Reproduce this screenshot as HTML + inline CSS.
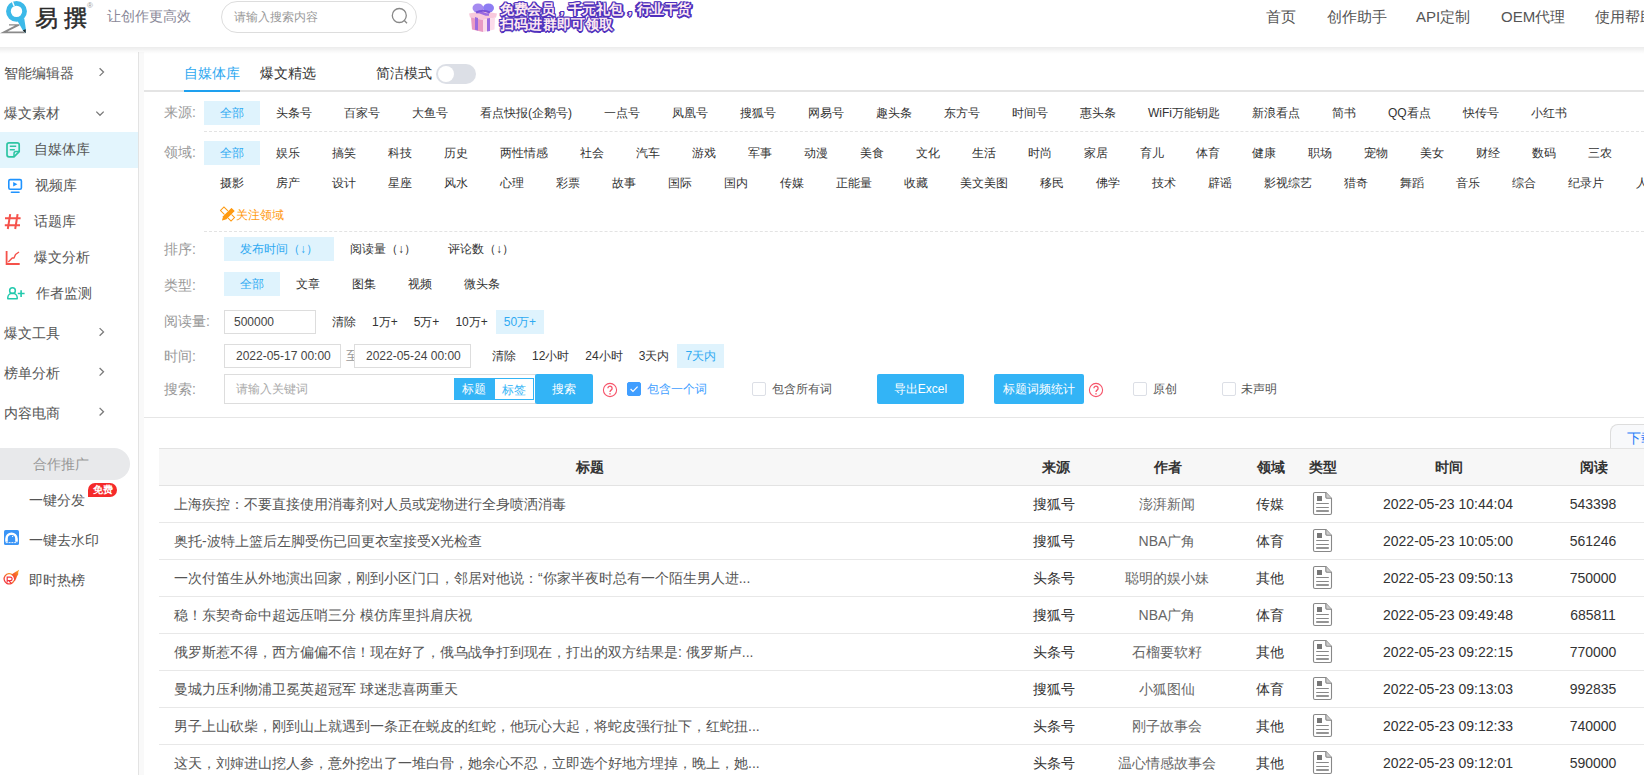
<!DOCTYPE html>
<html><head><meta charset="utf-8">
<style>
*{box-sizing:border-box;margin:0;padding:0}
html,body{width:1644px;height:775px;overflow:hidden;background:#fff;font-family:"Liberation Sans",sans-serif;color:#333}
.a{position:absolute;white-space:nowrap}
#hdr{position:absolute;left:0;top:0;width:1644px;height:47px;background:#fff}
#band{position:absolute;left:0;top:47px;width:1644px;height:7px;background:linear-gradient(rgba(0,0,0,0.075),rgba(0,0,0,0.055) 30%,rgba(0,0,0,0.02) 70%,rgba(0,0,0,0));z-index:5}
#side{position:absolute;left:0;top:52px;width:138px;height:723px;background:#fff}
#sline{position:absolute;left:138px;top:52px;width:1px;height:723px;background:#e3e3e3}
#sgap{position:absolute;left:139px;top:52px;width:5px;height:723px;background:#f9f9f9}
#main{position:absolute;left:144px;top:52px;width:1500px;height:723px;background:#fff}
.nav{font-size:15px;color:#555;top:8px}
.si{font-size:14px;color:#555}
.chev{position:absolute;width:7px;height:7px;border-right:1.3px solid #888;border-top:1.3px solid #888}
.tab{font-size:14px;line-height:18px}
.lbl{font-size:14px;color:#999}
.frow{display:flex;white-space:nowrap}
.it{display:inline-block;padding:0 16px;height:24px;line-height:24px;font-size:12px;color:#333}
.it.s{padding:0 8px}
.it.on{background:#dff3fd;color:#2faaf2}
.inp{height:24px;border:1px solid #ddd;background:#fff;font-size:12px;line-height:22px;padding-left:9px;color:#444}
.seg{width:40px;height:22px;line-height:22px;text-align:center;font-size:12px}
.btn{height:30px;line-height:30px;text-align:center;background:#33b4f6;color:#fff;font-size:12px;border-radius:2px}
.q{width:15px;height:15px;border:1px solid #f56c6c;border-radius:50%;color:#f56c6c;font-size:11px;line-height:13px;text-align:center}
.cb{width:14px;height:14px;border:1px solid #dcdfe6;border-radius:2px;background:#fff}
.cb.on{background:#409eff;border-color:#409eff}
.th{top:407px;font-size:14px;font-weight:bold;color:#333}
.td{font-size:14px;line-height:18px}
.c{text-align:center}
.gift{font-size:14px;font-weight:900;line-height:15px;color:#fde9f1;letter-spacing:-0.35px;text-shadow:1.5px 0.0px 0 #4f30bd,-1.5px 0.0px 0 #4f30bd,0.0px 1.5px 0 #4f30bd,0.0px -1.5px 0 #4f30bd,1.1px 1.1px 0 #4f30bd,-1.1px -1.1px 0 #4f30bd,1.1px -1.1px 0 #4f30bd,-1.1px 1.1px 0 #4f30bd}
</style></head><body>
<div id="hdr">
  <svg class="a" style="left:0;top:0" width="30" height="36" viewBox="0 0 30 36">
    <path d="M9 24.2 L19.5 24.2 L19.5 25.6 L7.5 31.6 L24 31.6 L25 33.2 L0 33.2 L15 25.6 L9 25.4 Z" fill="#8a8a8a"/>
    <circle cx="16.5" cy="11.35" r="8.07" fill="none" stroke="#3cb9e8" stroke-width="4.75"/>
    <path d="M17.2 20.5 L24.3 18.8 L25.9 29.5 L25.6 33.2 L22.8 30.2 Z" fill="#3cb9e8"/>
    <path d="M22.8 30.2 L25.8 29.2 L25.6 33.2 Z" fill="#222"/>
    <path d="M12.3 1.2 L14.2 6.2" stroke="#fff" stroke-width="1.4"/>
  </svg>
  <div class="a" style="left:35px;top:3px;font-size:23px;font-weight:normal;color:#2a2a2a;letter-spacing:6px;-webkit-text-stroke:0.5px #2a2a2a">易撰</div>
  <div class="a" style="left:87px;top:1px;font-size:8px;color:#999">®</div>
  <div class="a" style="left:107px;top:8px;font-size:14px;color:#8a8898">让创作更高效</div>
  <div class="a" style="left:221px;top:1px;width:196px;height:32px;border:1px solid #ddd;border-radius:16px"></div>
  <div class="a" style="left:234px;top:9px;font-size:12px;color:#999">请输入搜索内容</div>
  <svg class="a" style="left:390px;top:7px" width="20" height="20" viewBox="0 0 20 20"><circle cx="9.3" cy="8.5" r="7" fill="none" stroke="#888" stroke-width="1.3"/><path d="M14.3 13.5 L17 16.2" stroke="#888" stroke-width="1.3"/></svg>
  
  <svg class="a" style="left:466px;top:1px" width="32" height="33" viewBox="466 1 32 33">
    <path d="M469 13.5 L483 11 L497 13.5 L496 17.5 L483 20 L470 17.5 Z" fill="#f8c9dc"/>
    <path d="M471 17.5 L483 20 V32 L472 29.5 Z" fill="#e99ac3"/>
    <path d="M483 20 L495 17.5 L494.5 29.5 L483 32 Z" fill="#fbdcea"/>
    <path d="M475 17 L478 18 V30.5 L475 29.8 Z M487 18.5 L490 18 V31 L487 31.5 Z" fill="#9b6ae0"/>
    <path d="M477 12 L480 12.3 L486 14.5 L489 14.5" stroke="#9b6ae0" stroke-width="2.5" fill="none"/>
    <ellipse cx="478" cy="8" rx="5.5" ry="4.5" fill="#a58af0"/>
    <ellipse cx="488.5" cy="8" rx="5.5" ry="4.5" fill="#8d7cf3"/>
    <path d="M476 12.5 Q483 9 490 12.5" stroke="#7a52d8" stroke-width="2" fill="none"/>
  </svg>
  <div class="a gift" style="left:500px;top:2px">免费会员，千元礼包，行业干货</div>
  <div class="a gift" style="left:500px;top:17px;letter-spacing:0.2px">扫码进群即可领取</div>
  <div class="a nav" style="left:1266px">首页</div>
  <div class="a nav" style="left:1327px">创作助手</div>
  <div class="a nav" style="left:1416px">API定制</div>
  <div class="a nav" style="left:1501px">OEM代理</div>
  <div class="a nav" style="left:1595px">使用帮助</div>
</div>
<div id="band"></div>
<div id="side">
  
  <svg class="a" style="left:0;top:476px" width="30" height="64" viewBox="0 528 30 64">
    <defs><linearGradient id="hg" x1="0" y1="1" x2="1" y2="0"><stop offset="0" stop-color="#f2273f"/><stop offset="0.55" stop-color="#f76a2a"/><stop offset="1" stop-color="#fbb31a"/></linearGradient></defs>
    <rect x="4" y="530" width="15" height="15" rx="1.6" fill="#3b95f6"/>
    <path d="M6.5 541.8 V538.8 A5 5 0 0 1 16.5 538.8 V541.8" fill="none" stroke="#fff" stroke-width="2.6"/>
    <circle cx="11.5" cy="538" r="2.8" fill="#3b95f6"/>
    <circle cx="12.6" cy="536.4" r="0.6" fill="#fff"/>
    <path d="M5.8 542.6 H17.2" stroke="#fff" stroke-width="0.9" stroke-dasharray="2 0.8"/>
    <path d="M12.8 575.2 A5.1 5.1 0 1 0 14 580.5" fill="none" stroke="url(#hg)" stroke-width="1.3"/>
    <path d="M7.2 582.5 V577.2 H10.4 A1.7 1.7 0 0 1 10.4 580.6 H8.6 L11.6 583.6" fill="none" stroke="#f2333f" stroke-width="1.2"/>
    <path d="M11.5 574.5 Q14.5 572.5 19.2 569.8 Q17.6 572.5 18.2 574.5 Q16.8 576.2 16.2 578.6 Q15.4 581 14 581.5 Q14.6 577.5 11.5 574.5 Z" fill="url(#hg)"/>
  </svg>
  <div class="a si" style="left:4px;top:13px">智能编辑器</div>
  <div class="a si" style="left:4px;top:53px">爆文素材</div>
  <div class="a" style="left:0;top:80px;width:138px;height:36px;background:#e3f5fd"></div>
  <svg class="a" style="left:0;top:82px" width="30" height="250" viewBox="0 134 30 250">
    <!-- doc green -->
    <path d="M9 142.8 H17.2 A2 2 0 0 1 19.2 144.8 V151.6 L14 156.8 H9 A2 2 0 0 1 7 154.8 V144.8 A2 2 0 0 1 9 142.8 Z" fill="none" stroke="#2ec5a3" stroke-width="1.7" stroke-linejoin="round"/>
    <path d="M14 156.8 V153.5 A2 2 0 0 1 16 151.5 H19.2" fill="none" stroke="#2ec5a3" stroke-width="1.5"/>
    <path d="M9.8 146.3 H16.2 M9.8 149.8 H14.8" stroke="#2ec5a3" stroke-width="1.5"/>
    <!-- video blue -->
    <rect x="8.8" y="179.6" width="12.6" height="9.6" rx="1.4" fill="none" stroke="#1f93ff" stroke-width="1.6"/>
    <path d="M13.2 182 L17.4 184.3 L13.2 186.6 Z" fill="#1f93ff"/>
    <path d="M11.4 192.3 H19" stroke="#1f93ff" stroke-width="1.6" stroke-linecap="round"/>
    <!-- hash red -->
    <path d="M10.2 214.2 L7.8 229 M17.6 214.2 L15.2 229 M5 218.2 H20.6 M4.8 225.2 H20" stroke="#f5524b" stroke-width="2"/>
    <!-- chart red -->
    <path d="M6.6 251 V264 H19.7" fill="none" stroke="#f5524b" stroke-width="1.8"/>
    <path d="M8.3 262 L12.2 258 L14 258 L15.5 254.5 L19 252" fill="none" stroke="#f5524b" stroke-width="1.4" stroke-linejoin="round"/>
    <!-- person green -->
    <circle cx="12.5" cy="290.7" r="2.85" fill="none" stroke="#22c9ad" stroke-width="1.5"/>
    <path d="M7.8 298.8 V297.6 A4.7 4.3 0 0 1 17.2 297.6 V298.8 Z" fill="none" stroke="#22c9ad" stroke-width="1.5" stroke-linejoin="round"/>
    <path d="M17.8 293.5 H24.6 M21.1 290.2 V296.9" stroke="#22c9ad" stroke-width="1.6"/>
  </svg>
  <div class="a si" style="left:34px;top:89px">自媒体库</div>
  <div class="a si" style="left:35px;top:125px">视频库</div>
  <div class="a si" style="left:34px;top:161px">话题库</div>
  <div class="a si" style="left:34px;top:197px">爆文分析</div>
  <div class="a si" style="left:36px;top:233px">作者监测</div>
  <div class="a si" style="left:4px;top:273px">爆文工具</div>
  <div class="a si" style="left:4px;top:313px">榜单分析</div>
  <div class="a si" style="left:4px;top:353px">内容电商</div>
  <div class="a" style="left:-16px;top:396px;width:146px;height:32px;border-radius:16px;background:#e8e9eb"></div>
  <div class="a si" style="left:33px;top:404px;color:#999">合作推广</div>
  <div class="a si" style="left:29px;top:440px">一键分发</div>
  <div class="a" style="left:88px;top:431px;width:29px;height:14px;border-radius:7px 7px 7px 0;background:#f52a2a;color:#fff;font-size:10px;font-weight:bold;line-height:14px;text-align:center">免费</div>
  <div class="a si" style="left:29px;top:480px">一键去水印</div>
  <div class="a si" style="left:29px;top:520px">即时热榜</div>
</div>
<svg class="a" style="left:0;top:0;z-index:3" width="138" height="430" viewBox="0 0 138 430">
<path d="M99.6 68.3 L103.5 72.1 L99.6 75.9 M96.3 111.6 L100 115.3 L103.7 111.6 M99.6 328.1 L103.5 331.9 L99.6 335.7 M99.6 368 L103.5 371.8 L99.6 375.6 M99.6 407.9 L103.5 411.7 L99.6 415.5" fill="none" stroke="#7a7a7a" stroke-width="1.3"/>
</svg>
<div id="sline"></div>
<div id="sgap"></div>
<div id="main">
  <div class="a tab" style="left:40px;top:12px;color:#2ea8f0">自媒体库</div>
  <div class="a tab" style="left:116px;top:12px;color:#333">爆文精选</div>
  <div class="a tab" style="left:232px;top:12px;color:#333">简洁模式</div>
  <div class="a" style="left:292px;top:12px;width:40px;height:20px;border-radius:10px;background:#dcdfe6"></div>
  <div class="a" style="left:294px;top:14px;width:16px;height:16px;border-radius:8px;background:#fff"></div>
  <div class="a" style="left:0;top:38px;width:1500px;height:2px;background:#e4e4e4"></div>
  <div class="a" style="left:40px;top:38px;width:56px;height:2px;background:#1ea0ef"></div>

  <div class="a lbl" style="left:20px;top:52px">来源:</div>
  <div class="a frow" style="left:60px;top:49px"><span class="it on">全部</span><span class="it">头条号</span><span class="it">百家号</span><span class="it">大鱼号</span><span class="it">看点快报(企鹅号)</span><span class="it">一点号</span><span class="it">凤凰号</span><span class="it">搜狐号</span><span class="it">网易号</span><span class="it">趣头条</span><span class="it">东方号</span><span class="it">时间号</span><span class="it">惠头条</span><span class="it">WiFi万能钥匙</span><span class="it">新浪看点</span><span class="it">简书</span><span class="it">QQ看点</span><span class="it">快传号</span><span class="it">小红书</span></div>
  <div class="a" style="left:60px;top:79px;width:1440px;border-top:1px dashed #e3e3e3"></div>
  <div class="a lbl" style="left:20px;top:92px">领域:</div>
  <div class="a frow" style="left:60px;top:89px"><span class="it on">全部</span><span class="it">娱乐</span><span class="it">搞笑</span><span class="it">科技</span><span class="it">历史</span><span class="it">两性情感</span><span class="it">社会</span><span class="it">汽车</span><span class="it">游戏</span><span class="it">军事</span><span class="it">动漫</span><span class="it">美食</span><span class="it">文化</span><span class="it">生活</span><span class="it">时尚</span><span class="it">家居</span><span class="it">育儿</span><span class="it">体育</span><span class="it">健康</span><span class="it">职场</span><span class="it">宠物</span><span class="it">美女</span><span class="it">财经</span><span class="it">数码</span><span class="it">三农</span></div>
  <div class="a frow" style="left:60px;top:119px"><span class="it">摄影</span><span class="it">房产</span><span class="it">设计</span><span class="it">星座</span><span class="it">风水</span><span class="it">心理</span><span class="it">彩票</span><span class="it">故事</span><span class="it">国际</span><span class="it">国内</span><span class="it">传媒</span><span class="it">正能量</span><span class="it">收藏</span><span class="it">美文美图</span><span class="it">移民</span><span class="it">佛学</span><span class="it">技术</span><span class="it">辟谣</span><span class="it">影视综艺</span><span class="it">猎奇</span><span class="it">舞蹈</span><span class="it">音乐</span><span class="it">综合</span><span class="it">纪录片</span><span class="it">人物</span></div>
  <svg class="a" style="left:76px;top:154px" width="16" height="16" viewBox="220 206 16 16">
    <rect x="225" y="206.5" width="5" height="15" transform="rotate(-45 227.5 214)" fill="none" stroke="#ff9a10" stroke-width="1"/>
    <path d="M222 220.5 L223.2 216.2 L231.5 207.9 L234.6 211 L226.3 219.3 Z" fill="#ff9a10" stroke="#fff" stroke-width="0.8"/>
    <path d="M222 220.5 L223.2 216.2 L231.5 207.9 L234.6 211 L226.3 219.3 Z" fill="#ff9a10"/>
  </svg>
  <div class="a" style="left:92px;top:155px;font-size:12px;color:#ff9a10">关注领域</div>
  <div class="a" style="left:60px;top:179px;width:1440px;border-top:1px dashed #e3e3e3"></div>

  <div class="a lbl" style="left:20px;top:189px">排序:</div>
  <div class="a frow" style="left:80px;top:185px"><span class="it on">发布时间（↓）</span><span class="it">阅读量（↓）</span><span class="it">评论数（↓）</span></div>
  <div class="a lbl" style="left:20px;top:225px">类型:</div>
  <div class="a frow" style="left:80px;top:220px"><span class="it on">全部</span><span class="it">文章</span><span class="it">图集</span><span class="it">视频</span><span class="it">微头条</span></div>
  <div class="a lbl" style="left:20px;top:261px">阅读量:</div>
  <div class="a inp" style="left:80px;top:258px;width:92px">500000</div>
  <div class="a frow" style="left:180px;top:258px"><span class="it s">清除</span><span class="it s">1万+</span><span class="it s">5万+</span><span class="it s">10万+</span><span class="it s on">50万+</span></div>
  <div class="a lbl" style="left:20px;top:296px">时间:</div>
  <div class="a inp" style="left:80px;top:292px;width:117px;padding-left:11px">2022-05-17 00:00</div>
  <div class="a" style="left:202px;top:295px;font-size:13px;color:#999">至</div>
  <div class="a inp" style="left:210px;top:292px;width:117px;padding-left:11px">2022-05-24 00:00</div>
  <div class="a frow" style="left:340px;top:292px"><span class="it s">清除</span><span class="it s">12小时</span><span class="it s">24小时</span><span class="it s">3天内</span><span class="it s on">7天内</span></div>
  <div class="a lbl" style="left:20px;top:329px">搜索:</div>
  <div class="a" style="left:80px;top:322px;width:312px;height:30px;border:1px solid #ddd"></div>
  <div class="a" style="left:92px;top:329px;font-size:12px;color:#aaa">请输入关键词</div>
  <div class="a seg" style="left:310px;top:326px;background:#33b4f6;color:#fff">标题</div>
  <div class="a seg" style="left:350px;top:326px;background:#fff;color:#33b4f6;border:1px solid #33b4f6">标签</div>
  <div class="a btn" style="left:391px;top:322px;width:58px">搜索</div>
  <div class="a" style="left:458px;top:330px"><svg width="16" height="16" viewBox="0 0 16 16"><circle cx="8" cy="8" r="6.6" fill="none" stroke="#f6546a" stroke-width="1.1"/><path d="M5.9 6.3 A2.1 2.1 0 1 1 9.3 7.9 Q8 8.8 8 10" fill="none" stroke="#f6546a" stroke-width="1.3"/><rect x="7.3" y="11.2" width="1.4" height="1.3" fill="#f6546a"/></svg></div>
  <div class="a cb on" style="left:483px;top:330px"><svg width="12" height="12" viewBox="0 0 12 12" style="position:absolute;left:0;top:0"><path d="M2.6 6 L5 8.4 L9.6 3.6" fill="none" stroke="#fff" stroke-width="1.2"/></svg></div>
  <div class="a" style="left:503px;top:329px;font-size:12px;color:#409eff">包含一个词</div>
  <div class="a cb" style="left:608px;top:330px"></div>
  <div class="a" style="left:628px;top:329px;font-size:12px;color:#555">包含所有词</div>
  <div class="a btn" style="left:733px;top:322px;width:87px">导出Excel</div>
  <div class="a btn" style="left:850px;top:322px;width:90px">标题词频统计</div>
  <div class="a" style="left:944px;top:330px"><svg width="16" height="16" viewBox="0 0 16 16"><circle cx="8" cy="8" r="6.6" fill="none" stroke="#f6546a" stroke-width="1.1"/><path d="M5.9 6.3 A2.1 2.1 0 1 1 9.3 7.9 Q8 8.8 8 10" fill="none" stroke="#f6546a" stroke-width="1.3"/><rect x="7.3" y="11.2" width="1.4" height="1.3" fill="#f6546a"/></svg></div>
  <div class="a cb" style="left:989px;top:330px"></div>
  <div class="a" style="left:1009px;top:329px;font-size:12px;color:#555">原创</div>
  <div class="a cb" style="left:1078px;top:330px"></div>
  <div class="a" style="left:1097px;top:329px;font-size:12px;color:#555">未声明</div>
  <div class="a" style="left:0;top:365px;width:1500px;height:1px;background:#e6e6e6"></div>
<div id="tbl">
  <div class="a" style="left:1466px;top:372px;width:60px;height:25px;border:1px solid #ddd;border-bottom:none;border-top-left-radius:8px;background:#f8f9fb"></div>
  <div class="a" style="left:1483px;top:378px;font-size:14px;color:#2d7ff9">下载</div>
  <div class="a" style="left:15px;top:396px;width:1500px;height:38px;background:#f7f7f7;border-top:1px solid #e3e3e3;border-bottom:1px solid #e3e3e3"></div>
  <div class="a th" style="left:432px">标题</div>
  <div class="a th" style="left:898px">来源</div>
  <div class="a th" style="left:1010px">作者</div>
  <div class="a th" style="left:1113px">领域</div>
  <div class="a th" style="left:1165px">类型</div>
  <div class="a th" style="left:1291px">时间</div>
  <div class="a th" style="left:1436px">阅读</div>
<div class="a" style="left:15px;top:434px;width:1500px;height:37px;border-bottom:1px solid #e8e8e8"></div>
<div class="a td" style="left:30px;top:443px;color:#555">上海疾控：不要直接使用消毒剂对人员或宠物进行全身喷洒消毒</div>
<div class="a td c" style="left:860px;width:100px;top:443px;color:#333">搜狐号</div>
<div class="a td c" style="left:948px;width:150px;top:443px;color:#666">澎湃新闻</div>
<div class="a td c" style="left:1076px;width:100px;top:443px;color:#333">传媒</div>
<div class="a" style="left:1168px;top:439px"><svg width="22" height="26" viewBox="0 0 22 26"><path d="M3 1.5 H13.8 L19.5 7.3 V22 A1.5 1.5 0 0 1 18 23.5 H3 A1.5 1.5 0 0 1 1.5 22 V3 A1.5 1.5 0 0 1 3 1.5 Z" fill="#fff" stroke="#888" stroke-width="1.1" stroke-linejoin="round"/><path d="M13.8 1.5 V6 A1.3 1.3 0 0 0 15.1 7.3 H19.5" fill="#ccc" stroke="#888" stroke-width="1.1"/><rect x="5" y="5" width="5" height="5" fill="#777"/><path d="M4.2 12.5 H16.8 M4.2 16.5 H16.8" stroke="#888" stroke-width="1.1"/><path d="M4.2 20 H16.8" stroke="#888" stroke-width="1.8"/></svg></div>
<div class="a td c" style="left:1204px;width:200px;top:443px;color:#333">2022-05-23 10:44:04</div>
<div class="a td c" style="left:1399px;width:100px;top:443px;color:#333">543398</div>
<div class="a" style="left:15px;top:471px;width:1500px;height:37px;border-bottom:1px solid #e8e8e8"></div>
<div class="a td" style="left:30px;top:480px;color:#555">奥托-波特上篮后左脚受伤已回更衣室接受X光检查</div>
<div class="a td c" style="left:860px;width:100px;top:480px;color:#333">搜狐号</div>
<div class="a td c" style="left:948px;width:150px;top:480px;color:#666">NBA广角</div>
<div class="a td c" style="left:1076px;width:100px;top:480px;color:#333">体育</div>
<div class="a" style="left:1168px;top:476px"><svg width="22" height="26" viewBox="0 0 22 26"><path d="M3 1.5 H13.8 L19.5 7.3 V22 A1.5 1.5 0 0 1 18 23.5 H3 A1.5 1.5 0 0 1 1.5 22 V3 A1.5 1.5 0 0 1 3 1.5 Z" fill="#fff" stroke="#888" stroke-width="1.1" stroke-linejoin="round"/><path d="M13.8 1.5 V6 A1.3 1.3 0 0 0 15.1 7.3 H19.5" fill="#ccc" stroke="#888" stroke-width="1.1"/><rect x="5" y="5" width="5" height="5" fill="#777"/><path d="M4.2 12.5 H16.8 M4.2 16.5 H16.8" stroke="#888" stroke-width="1.1"/><path d="M4.2 20 H16.8" stroke="#888" stroke-width="1.8"/></svg></div>
<div class="a td c" style="left:1204px;width:200px;top:480px;color:#333">2022-05-23 10:05:00</div>
<div class="a td c" style="left:1399px;width:100px;top:480px;color:#333">561246</div>
<div class="a" style="left:15px;top:508px;width:1500px;height:37px;border-bottom:1px solid #e8e8e8"></div>
<div class="a td" style="left:30px;top:517px;color:#555">一次付笛生从外地演出回家，刚到小区门口，邻居对他说：“你家半夜时总有一个陌生男人进...</div>
<div class="a td c" style="left:860px;width:100px;top:517px;color:#333">头条号</div>
<div class="a td c" style="left:948px;width:150px;top:517px;color:#666">聪明的娱小妹</div>
<div class="a td c" style="left:1076px;width:100px;top:517px;color:#333">其他</div>
<div class="a" style="left:1168px;top:513px"><svg width="22" height="26" viewBox="0 0 22 26"><path d="M3 1.5 H13.8 L19.5 7.3 V22 A1.5 1.5 0 0 1 18 23.5 H3 A1.5 1.5 0 0 1 1.5 22 V3 A1.5 1.5 0 0 1 3 1.5 Z" fill="#fff" stroke="#888" stroke-width="1.1" stroke-linejoin="round"/><path d="M13.8 1.5 V6 A1.3 1.3 0 0 0 15.1 7.3 H19.5" fill="#ccc" stroke="#888" stroke-width="1.1"/><rect x="5" y="5" width="5" height="5" fill="#777"/><path d="M4.2 12.5 H16.8 M4.2 16.5 H16.8" stroke="#888" stroke-width="1.1"/><path d="M4.2 20 H16.8" stroke="#888" stroke-width="1.8"/></svg></div>
<div class="a td c" style="left:1204px;width:200px;top:517px;color:#333">2022-05-23 09:50:13</div>
<div class="a td c" style="left:1399px;width:100px;top:517px;color:#333">750000</div>
<div class="a" style="left:15px;top:545px;width:1500px;height:37px;border-bottom:1px solid #e8e8e8"></div>
<div class="a td" style="left:30px;top:554px;color:#555">稳！东契奇命中超远压哨三分 模仿库里抖肩庆祝</div>
<div class="a td c" style="left:860px;width:100px;top:554px;color:#333">搜狐号</div>
<div class="a td c" style="left:948px;width:150px;top:554px;color:#666">NBA广角</div>
<div class="a td c" style="left:1076px;width:100px;top:554px;color:#333">体育</div>
<div class="a" style="left:1168px;top:550px"><svg width="22" height="26" viewBox="0 0 22 26"><path d="M3 1.5 H13.8 L19.5 7.3 V22 A1.5 1.5 0 0 1 18 23.5 H3 A1.5 1.5 0 0 1 1.5 22 V3 A1.5 1.5 0 0 1 3 1.5 Z" fill="#fff" stroke="#888" stroke-width="1.1" stroke-linejoin="round"/><path d="M13.8 1.5 V6 A1.3 1.3 0 0 0 15.1 7.3 H19.5" fill="#ccc" stroke="#888" stroke-width="1.1"/><rect x="5" y="5" width="5" height="5" fill="#777"/><path d="M4.2 12.5 H16.8 M4.2 16.5 H16.8" stroke="#888" stroke-width="1.1"/><path d="M4.2 20 H16.8" stroke="#888" stroke-width="1.8"/></svg></div>
<div class="a td c" style="left:1204px;width:200px;top:554px;color:#333">2022-05-23 09:49:48</div>
<div class="a td c" style="left:1399px;width:100px;top:554px;color:#333">685811</div>
<div class="a" style="left:15px;top:582px;width:1500px;height:37px;border-bottom:1px solid #e8e8e8"></div>
<div class="a td" style="left:30px;top:591px;color:#555">俄罗斯惹不得，西方偏偏不信！现在好了，俄乌战争打到现在，打出的双方结果是: 俄罗斯卢...</div>
<div class="a td c" style="left:860px;width:100px;top:591px;color:#333">头条号</div>
<div class="a td c" style="left:948px;width:150px;top:591px;color:#666">石榴要软籽</div>
<div class="a td c" style="left:1076px;width:100px;top:591px;color:#333">其他</div>
<div class="a" style="left:1168px;top:587px"><svg width="22" height="26" viewBox="0 0 22 26"><path d="M3 1.5 H13.8 L19.5 7.3 V22 A1.5 1.5 0 0 1 18 23.5 H3 A1.5 1.5 0 0 1 1.5 22 V3 A1.5 1.5 0 0 1 3 1.5 Z" fill="#fff" stroke="#888" stroke-width="1.1" stroke-linejoin="round"/><path d="M13.8 1.5 V6 A1.3 1.3 0 0 0 15.1 7.3 H19.5" fill="#ccc" stroke="#888" stroke-width="1.1"/><rect x="5" y="5" width="5" height="5" fill="#777"/><path d="M4.2 12.5 H16.8 M4.2 16.5 H16.8" stroke="#888" stroke-width="1.1"/><path d="M4.2 20 H16.8" stroke="#888" stroke-width="1.8"/></svg></div>
<div class="a td c" style="left:1204px;width:200px;top:591px;color:#333">2022-05-23 09:22:15</div>
<div class="a td c" style="left:1399px;width:100px;top:591px;color:#333">770000</div>
<div class="a" style="left:15px;top:619px;width:1500px;height:37px;border-bottom:1px solid #e8e8e8"></div>
<div class="a td" style="left:30px;top:628px;color:#555">曼城力压利物浦卫冕英超冠军 球迷悲喜两重天</div>
<div class="a td c" style="left:860px;width:100px;top:628px;color:#333">搜狐号</div>
<div class="a td c" style="left:948px;width:150px;top:628px;color:#666">小狐图仙</div>
<div class="a td c" style="left:1076px;width:100px;top:628px;color:#333">体育</div>
<div class="a" style="left:1168px;top:624px"><svg width="22" height="26" viewBox="0 0 22 26"><path d="M3 1.5 H13.8 L19.5 7.3 V22 A1.5 1.5 0 0 1 18 23.5 H3 A1.5 1.5 0 0 1 1.5 22 V3 A1.5 1.5 0 0 1 3 1.5 Z" fill="#fff" stroke="#888" stroke-width="1.1" stroke-linejoin="round"/><path d="M13.8 1.5 V6 A1.3 1.3 0 0 0 15.1 7.3 H19.5" fill="#ccc" stroke="#888" stroke-width="1.1"/><rect x="5" y="5" width="5" height="5" fill="#777"/><path d="M4.2 12.5 H16.8 M4.2 16.5 H16.8" stroke="#888" stroke-width="1.1"/><path d="M4.2 20 H16.8" stroke="#888" stroke-width="1.8"/></svg></div>
<div class="a td c" style="left:1204px;width:200px;top:628px;color:#333">2022-05-23 09:13:03</div>
<div class="a td c" style="left:1399px;width:100px;top:628px;color:#333">992835</div>
<div class="a" style="left:15px;top:656px;width:1500px;height:37px;border-bottom:1px solid #e8e8e8"></div>
<div class="a td" style="left:30px;top:665px;color:#555">男子上山砍柴，刚到山上就遇到一条正在蜕皮的红蛇，他玩心大起，将蛇皮强行扯下，红蛇扭...</div>
<div class="a td c" style="left:860px;width:100px;top:665px;color:#333">头条号</div>
<div class="a td c" style="left:948px;width:150px;top:665px;color:#666">刚子故事会</div>
<div class="a td c" style="left:1076px;width:100px;top:665px;color:#333">其他</div>
<div class="a" style="left:1168px;top:661px"><svg width="22" height="26" viewBox="0 0 22 26"><path d="M3 1.5 H13.8 L19.5 7.3 V22 A1.5 1.5 0 0 1 18 23.5 H3 A1.5 1.5 0 0 1 1.5 22 V3 A1.5 1.5 0 0 1 3 1.5 Z" fill="#fff" stroke="#888" stroke-width="1.1" stroke-linejoin="round"/><path d="M13.8 1.5 V6 A1.3 1.3 0 0 0 15.1 7.3 H19.5" fill="#ccc" stroke="#888" stroke-width="1.1"/><rect x="5" y="5" width="5" height="5" fill="#777"/><path d="M4.2 12.5 H16.8 M4.2 16.5 H16.8" stroke="#888" stroke-width="1.1"/><path d="M4.2 20 H16.8" stroke="#888" stroke-width="1.8"/></svg></div>
<div class="a td c" style="left:1204px;width:200px;top:665px;color:#333">2022-05-23 09:12:33</div>
<div class="a td c" style="left:1399px;width:100px;top:665px;color:#333">740000</div>
<div class="a" style="left:15px;top:693px;width:1500px;height:37px;border-bottom:1px solid #e8e8e8"></div>
<div class="a td" style="left:30px;top:702px;color:#555">这天，刘婶进山挖人参，意外挖出了一堆白骨，她余心不忍，立即选个好地方埋掉，晚上，她...</div>
<div class="a td c" style="left:860px;width:100px;top:702px;color:#333">头条号</div>
<div class="a td c" style="left:948px;width:150px;top:702px;color:#666">温心情感故事会</div>
<div class="a td c" style="left:1076px;width:100px;top:702px;color:#333">其他</div>
<div class="a" style="left:1168px;top:698px"><svg width="22" height="26" viewBox="0 0 22 26"><path d="M3 1.5 H13.8 L19.5 7.3 V22 A1.5 1.5 0 0 1 18 23.5 H3 A1.5 1.5 0 0 1 1.5 22 V3 A1.5 1.5 0 0 1 3 1.5 Z" fill="#fff" stroke="#888" stroke-width="1.1" stroke-linejoin="round"/><path d="M13.8 1.5 V6 A1.3 1.3 0 0 0 15.1 7.3 H19.5" fill="#ccc" stroke="#888" stroke-width="1.1"/><rect x="5" y="5" width="5" height="5" fill="#777"/><path d="M4.2 12.5 H16.8 M4.2 16.5 H16.8" stroke="#888" stroke-width="1.1"/><path d="M4.2 20 H16.8" stroke="#888" stroke-width="1.8"/></svg></div>
<div class="a td c" style="left:1204px;width:200px;top:702px;color:#333">2022-05-23 09:12:01</div>
<div class="a td c" style="left:1399px;width:100px;top:702px;color:#333">590000</div>
</div>
</div>
</body></html>
